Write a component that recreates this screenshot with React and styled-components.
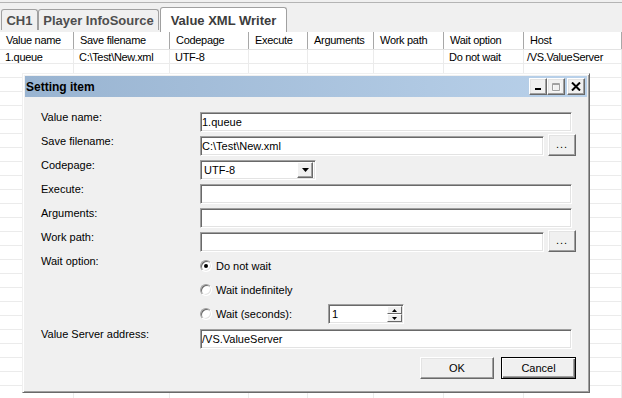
import React from "react";
import styled, { createGlobalStyle } from "styled-components";

const GlobalStyle = createGlobalStyle`
  html, body { margin: 0; padding: 0; }
  body {
    background: #fff;
    font-family: "Liberation Sans", Arial, sans-serif;
    font-size: 11px;
    color: #000;
  }
`;

const Page = styled.div`
  position: relative;
  width: 622px;
  height: 398px;
  overflow: hidden;
  background: #fff;
`;

const TabArea = styled.div`
  background: #f0f0f0;
  padding-top: 2px;
`;

const TabRow = styled.div`
  display: flex;
  align-items: flex-end;
  height: 30px;
  box-sizing: border-box;
  border-top: 1px solid #b4b4b4;
  padding-left: 1px;
`;

const Tab = styled.div`
  width: ${(p) => p.w}px;
  height: ${(p) => (p.active ? 25 : 21)}px;
  margin-bottom: ${(p) => (p.active ? 0 : 2)}px;
  margin-left: ${(p) => (p.active ? 1 : 0)}px;
  box-sizing: border-box;
  display: flex;
  align-items: center;
  justify-content: center;
  border: 1px solid #a0a0a0;
  border-bottom: none;
  border-radius: 3px 3px 0 0;
  background: ${(p) => (p.active ? "#fff" : "#f0f0f0")};
  color: ${(p) => (p.active ? "#3c3c3c" : "#4e4e4e")};
  font-weight: bold;
  font-size: 13px;
  white-space: nowrap;
`;

const HeaderRow = styled.div`
  display: flex;
  height: 18px;
  box-sizing: border-box;
  border-bottom: 1px solid #e3e3e3;
  background: #fff;
`;

const HeaderCell = styled.div`
  flex: ${(p) => (p.w ? "none" : 1)};
  width: ${(p) => (p.w ? `${p.w}px` : "auto")};
  box-sizing: border-box;
  padding-left: 6px;
  border-right: 1px solid #a8a8a8;
  line-height: 17px;
  white-space: nowrap;
  letter-spacing: -0.3px;
  color: #000;
`;

const DataRow = styled.div`
  display: flex;
  height: 14px;
  box-sizing: border-box;
  border-bottom: 1px solid #ebebeb;
`;

const DataCell = styled.div`
  flex: ${(p) => (p.w ? "none" : 1)};
  width: ${(p) => (p.w ? `${p.w}px` : "auto")};
  box-sizing: border-box;
  padding-left: ${(p) => p.pad ?? 5}px;
  border-right: 1px solid #ebebeb;
  line-height: 15px;
  white-space: nowrap;
  letter-spacing: -0.3px;
`;

const Window = styled.div`
  position: absolute;
  left: 22px;
  top: 73px;
  width: 568px;
  height: 320px;
  box-sizing: border-box;
  display: flex;
  flex-direction: column;
  background: #f0f0f0;
  border: 1px solid;
  border-color: #f0f0f0 #696969 #696969 #f0f0f0;
  box-shadow: inset 1px 1px #fff, inset -1px -1px #a0a0a0;
  padding: 2px;
`;

const TitleBar = styled.div`
  height: 21px;
  display: flex;
  align-items: center;
  padding: 0 2px 0 1px;
  background: linear-gradient(to right, #99b4d1, #b9d1ea);
`;

const Caption = styled.div`
  flex: 1;
  font-size: 12px;
  font-weight: bold;
  color: #000;
`;

const CapButton = styled.div`
  width: 18px;
  height: 17px;
  box-sizing: border-box;
  margin-left: ${(p) => p.gap || 0}px;
  display: flex;
  align-items: center;
  justify-content: center;
  background: #f0f0f0;
  border: 1px solid;
  border-color: #fff #696969 #696969 #fff;
  box-shadow: inset -1px -1px #a0a0a0, inset 1px 1px #e3e3e3;
`;

const Body = styled.div`
  flex: 1;
  padding: 15px 15px 0 16px;
  display: flex;
  flex-direction: column;
`;

const Row = styled.div`
  display: flex;
  align-items: flex-start;
  height: ${(p) => p.h || 24}px;
  margin-top: ${(p) => p.mt || 0}px;
`;

const Label = styled.div`
  width: 159px;
  flex: none;
  line-height: 14px;
  margin-top: -2px;
  color: #000;
`;

const Field = styled.input`
  flex: ${(p) => (p.w ? "none" : 1)};
  width: ${(p) => (p.w ? `${p.w}px` : "auto")};
  min-width: 0;
  height: 20px;
  box-sizing: border-box;
  margin: 0;
  padding: 0 1px;
  font-family: "Liberation Sans", Arial, sans-serif;
  font-size: 11px;
  color: #000;
  background: #fff;
  border: 1px solid;
  border-color: #a0a0a0 #fff #fff #a0a0a0;
  box-shadow: inset 1px 1px #696969, inset -1px -1px #e3e3e3;
  outline: none;
`;

const ClassicButton = styled.div`
  width: ${(p) => p.w}px;
  height: 22px;
  box-sizing: border-box;
  flex: none;
  display: flex;
  align-items: center;
  justify-content: center;
  background: #f0f0f0;
  color: #000;
  font-size: 11px;
  border: 1px solid;
  border-color: ${(p) => (p.primary ? "#000" : "#fff #696969 #696969 #fff")};
  box-shadow: ${(p) =>
    p.primary
      ? "inset 1px 1px #fff, inset -1px -1px #696969, inset -2px -2px #a0a0a0"
      : "inset -1px -1px #a0a0a0, inset 1px 1px #e3e3e3"};
`;

const BrowseButton = styled(ClassicButton)`
  margin: -2px -4px 0 4px;
  letter-spacing: 1px;
  padding-bottom: 2px;
`;

const Select = styled.div`
  width: 116px;
  height: 20px;
  box-sizing: border-box;
  display: flex;
  align-items: center;
  background: #fff;
  border: 1px solid;
  border-color: #a0a0a0 #fff #fff #a0a0a0;
  box-shadow: inset 1px 1px #696969, inset -1px -1px #e3e3e3;
  padding: 1px 2px 1px 2px;
`;

const SelectText = styled.div`
  flex: 1;
  padding-left: 1px;
`;

const ArrowButton = styled.div`
  width: 16px;
  height: 16px;
  box-sizing: border-box;
  display: flex;
  align-items: center;
  justify-content: center;
  background: #f0f0f0;
  border: 1px solid;
  border-color: #fff #696969 #696969 #fff;
  box-shadow: inset -1px -1px #a0a0a0;
`;

const RadioGroup = styled.div`
  display: flex;
  flex-direction: column;
  margin-top: -2px;
`;

const RadioItem = styled.div`
  height: 24px;
  display: flex;
  align-items: center;
`;

const RadioText = styled.div`
  display: flex;
  align-items: center;
  width: ${(p) => (p.w ? `${p.w}px` : "auto")};
`;

const RadioCircle = styled.div`
  width: 12px;
  height: 12px;
  box-sizing: border-box;
  border-radius: 50%;
  margin-right: 4px;
  display: flex;
  align-items: center;
  justify-content: center;
  background: #fff;
  border: 1px solid;
  border-color: #a0a0a0 #fff #fff #a0a0a0;
  box-shadow: inset 1px 1px #696969, inset -1px -1px #e3e3e3;

  &::after {
    content: "";
    display: ${(p) => (p.checked ? "block" : "none")};
    width: 4px;
    height: 4px;
    border-radius: 50%;
    background: #000;
  }
`;

const SpinBox = styled.div`
  width: 76px;
  height: 20px;
  display: flex;
  box-sizing: border-box;
  background: #fff;
  border: 1px solid;
  border-color: #a0a0a0 #fff #fff #a0a0a0;
  box-shadow: inset 1px 1px #696969, inset -1px -1px #e3e3e3;
  padding: 1px;
`;

const SpinValue = styled.div`
  flex: 1;
  line-height: 17px;
  padding-left: 2px;
`;

const SpinButtons = styled.div`
  width: 15px;
  display: flex;
  flex-direction: column;
`;

const SpinButton = styled.div`
  flex: 1;
  box-sizing: border-box;
  display: flex;
  align-items: center;
  justify-content: center;
  background: #f0f0f0;
  border: 1px solid;
  border-color: #fff #696969 #696969 #fff;
`;

const ButtonRow = styled.div`
  display: flex;
  justify-content: flex-end;
  gap: 7px;
  margin: 8px -4px 0 0;
`;

const columns = [
  ["Value name", 74],
  ["Save filename", 96],
  ["Codepage", 79],
  ["Execute", 59],
  ["Arguments", 66],
  ["Work path", 70],
  ["Wait option", 80],
  ["Host", 0],
];

const record = ["1.queue", "C:\\Test\\New.xml", "UTF-8", "", "", "", "Do not wait", "/VS.ValueServer"];

const Down = ({ size = 7 }) => (
  <svg width={size} height={Math.ceil(size / 2)} viewBox="0 0 7 4">
    <path d="M0 0h7L3.5 4z" fill="#000" />
  </svg>
);

const Up = () => (
  <svg width="5" height="3" viewBox="0 0 5 3">
    <path d="M0 3h5L2.5 0z" fill="#000" />
  </svg>
);

export default function App() {
  const emptyRows = Array.from({ length: 24 });
  return (
    <Page>
      <GlobalStyle />
      <TabArea>
        <TabRow>
          <Tab w={37}>CH1</Tab>
          <Tab w={121}>Player InfoSource</Tab>
          <Tab w={127} active>
            Value XML Writer
          </Tab>
        </TabRow>
      </TabArea>

      <HeaderRow>
        {columns.map(([name, w]) => (
          <HeaderCell key={name} w={w}>
            {name}
          </HeaderCell>
        ))}
      </HeaderRow>
      <DataRow>
        {columns.map(([name, w], i) => (
          <DataCell key={name} w={w} pad={i === 7 ? 3 : 5}>
            {record[i]}
          </DataCell>
        ))}
      </DataRow>
      {emptyRows.map((_, r) => (
        <DataRow key={r}>
          {columns.map(([name, w]) => (
            <DataCell key={name} w={w} />
          ))}
        </DataRow>
      ))}

      <Window>
        <TitleBar>
          <Caption>Setting item</Caption>
          <CapButton>
            <svg width="10" height="9" viewBox="0 0 10 9">
              <rect x="2" y="6" width="6" height="2" fill="#000" />
            </svg>
          </CapButton>
          <CapButton>
            <svg width="10" height="10" viewBox="0 0 10 10">
              <path d="M2 2h8v8H2z" fill="none" stroke="#fff" />
              <path d="M1.5 1.5h7v7h-7z M1.5 2.5h7" fill="none" stroke="#a0a0a0" />
            </svg>
          </CapButton>
          <CapButton gap={2}>
            <svg width="10" height="9" viewBox="0 0 10 9">
              <path d="M1 0.5l8 8M9 0.5l-8 8" stroke="#000" strokeWidth="2" />
            </svg>
          </CapButton>
        </TitleBar>

        <Body>
          <Row>
            <Label>Value name:</Label>
            <Field readOnly value="1.queue" />
          </Row>
          <Row>
            <Label>Save filename:</Label>
            <Field readOnly value="C:\Test\New.xml" />
            <BrowseButton w={28}>...</BrowseButton>
          </Row>
          <Row>
            <Label>Codepage:</Label>
            <Select>
              <SelectText>UTF-8</SelectText>
              <ArrowButton>
                <Down />
              </ArrowButton>
            </Select>
          </Row>
          <Row>
            <Label>Execute:</Label>
            <Field readOnly value="" />
          </Row>
          <Row>
            <Label>Arguments:</Label>
            <Field readOnly value="" />
          </Row>
          <Row>
            <Label>Work path:</Label>
            <Field readOnly value="" />
            <BrowseButton w={28}>...</BrowseButton>
          </Row>
          <Row h={70}>
            <Label>Wait option:</Label>
            <RadioGroup>
              <RadioItem>
                <RadioText>
                  <RadioCircle checked />
                  Do not wait
                </RadioText>
              </RadioItem>
              <RadioItem>
                <RadioText>
                  <RadioCircle />
                  Wait indefinitely
                </RadioText>
              </RadioItem>
              <RadioItem>
                <RadioText w={128}>
                  <RadioCircle />
                  Wait (seconds):
                </RadioText>
                <SpinBox>
                  <SpinValue>1</SpinValue>
                  <SpinButtons>
                    <SpinButton>
                      <Up />
                    </SpinButton>
                    <SpinButton>
                      <Down size={5} />
                    </SpinButton>
                  </SpinButtons>
                </SpinBox>
              </RadioItem>
            </RadioGroup>
          </Row>
          <Row mt={3} h={20}>
            <Label>Value Server address:</Label>
            <Field readOnly value="/VS.ValueServer" />
          </Row>
          <ButtonRow>
            <ClassicButton w={74}>OK</ClassicButton>
            <ClassicButton w={75} primary>
              Cancel
            </ClassicButton>
          </ButtonRow>
        </Body>
      </Window>
    </Page>
  );
}
